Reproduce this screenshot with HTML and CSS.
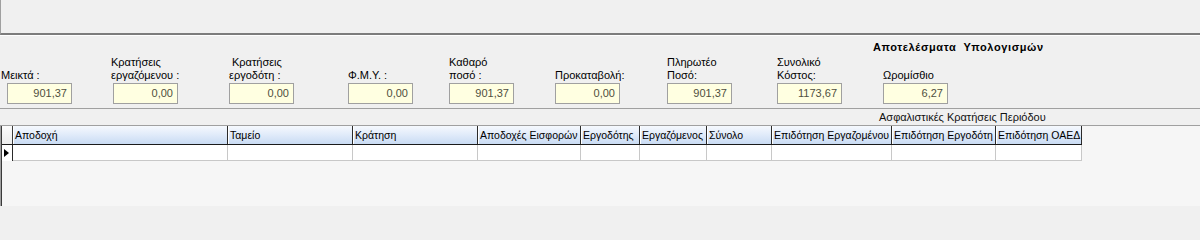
FILE: index.html
```html
<!DOCTYPE html>
<html lang="el">
<head>
<meta charset="utf-8">
<title>Αποτελέσματα Υπολογισμών</title>
<link rel="stylesheet" href="styles.css">
</head>
<body>
<div class="topbar"></div>
<div class="panel">
  <div class="title">Αποτελέσματα  Υπολογισμών</div>
  <div class="fields">
    <div class="field">
      <div class="label one shift-6">Μεικτά :</div>
      <div class="box">901,37</div>
    </div>
    <div class="field">
      <div class="label shift-2">Κρατήσεις<br>εργαζόμενου :</div>
      <div class="box">0,00</div>
    </div>
    <div class="field">
      <div class="label"><span class="indent2">Κρατήσεις</span><br>εργοδότη :</div>
      <div class="box">0,00</div>
    </div>
    <div class="field">
      <div class="label one">Φ.Μ.Υ. :</div>
      <div class="box">0,00</div>
    </div>
    <div class="field">
      <div class="label">Καθαρό<br>ποσό :</div>
      <div class="box">901,37</div>
    </div>
    <div class="field">
      <div class="label one">Προκαταβολή:</div>
      <div class="box">0,00</div>
    </div>
    <div class="field">
      <div class="label">Πληρωτέο<br>Ποσό:</div>
      <div class="box">901,37</div>
    </div>
    <div class="field">
      <div class="label">Συνολικό<br>Κόστος:</div>
      <div class="box">1173,67</div>
    </div>
    <div class="field">
      <div class="label one">Ωρομίσθιο</div>
      <div class="box">6,27</div>
    </div>
  </div>
</div>
<div class="band">Ασφαλιστικές Κρατήσεις Περιόδου</div>
<div class="grid">
  <div class="inner">
    <div class="row head">
      <div class="sel"></div>
      <div class="cell c1">Αποδοχή</div>
      <div class="cell c2">Ταμείο</div>
      <div class="cell c3">Κράτηση</div>
      <div class="cell c4">Αποδοχές Εισφορών</div>
      <div class="cell c5">Εργοδότης</div>
      <div class="cell c6">Εργαζόμενος</div>
      <div class="cell c7">Σύνολο</div>
      <div class="cell c8">Επιδότηση Εργαζομένου</div>
      <div class="cell c9">Επιδότηση Εργοδότη</div>
      <div class="cell c10">Επιδότηση ΟΑΕΔ</div>
    </div>
    <div class="row data">
      <div class="sel"><span class="arrow"></span></div>
      <div class="cell c1"></div>
      <div class="cell c2"></div>
      <div class="cell c3"></div>
      <div class="cell c4"></div>
      <div class="cell c5"></div>
      <div class="cell c6"></div>
      <div class="cell c7"></div>
      <div class="cell c8"></div>
      <div class="cell c9"></div>
      <div class="cell c10"></div>
    </div>
  </div>
</div>
</body>
</html>
```
FILE: styles.css
```css
* { box-sizing: border-box; }
html, body {
  margin: 0;
  padding: 0;
}
body {
  width: 1200px;
  height: 207px;
  overflow: hidden;
  background: #f0f0f0;
  font-family: "Liberation Sans", Arial, sans-serif;
  font-size: 11px;
  color: #000;
}
.topbar {
  height: 35px;
  border-left: 1px solid #a0a0a0;
  border-bottom: 2px solid #7c7c7c;
  background: #f0f0f0;
}
.panel {
  border-top: 1px solid #ffffff;
  border-bottom: 1px solid #a0a0a0;
  padding: 5px 0 4px 0;
  height: 74px;
}
.title {
  font-weight: bold;
  line-height: 13px;
  padding-left: 873px;
  white-space: pre;
  letter-spacing: 0.6px;
}
.fields {
  display: grid;
  grid-template-columns: 106px 116px 119px 101px 106px 112px 110px 106px 65px;
  padding-left: 7px;
  margin-top: 2px;
}
.field {
  display: flex;
  flex-direction: column;
}
.label {
  height: 26px;
  line-height: 13px;
  white-space: nowrap;
  margin-bottom: 1px;
}
.label.one { padding-top: 13px; }
.shift-6 { margin-left: -6px; }
.shift-2 { margin-left: -2px; }
.indent2 { padding-left: 3px; }
.box {
  width: 65px;
  height: 21px;
  border: 1px solid #a0a0a0;
  background: #ffffe1;
  color: #4f4f40;
  text-align: right;
  padding-right: 4px;
  line-height: 19px;
}
.band {
  height: 16px;
  line-height: 16px;
  padding-left: 879px;
  color: #111;
}
.grid {
  height: 81px;
  border-top: 1px solid #a0a0a0;
  border-left: 1px solid #a0a0a0;
  background: #f6f6f6;
}
.inner {
  height: 100%;
  border-left: 1px solid #3a3a3a;
}
.row {
  display: flex;
}
.head {
  height: 19px;
  border-bottom: 1px solid #1a1a1a;
  width: 1080px;
}
.head .sel {
  width: 11px;
  border-right: 1px solid #3a3a3a;
  background: linear-gradient(#fcfcfc, #ededed);
}
.head .cell {
  border-left: 1px solid #ffffff;
  border-right: 1px solid #2a2a2a;
  background: linear-gradient(#f6f9fe 0%, #e2ecfa 45%, #c9dbf3 100%);
  line-height: 18px;
  padding-left: 1px;
  white-space: nowrap;
  overflow: hidden;
  font-size: 10.5px;
  color: #000;
}
.data {
  height: 16px;
  width: 1080px;
}
.data .sel {
  width: 11px;
  border-right: 1px solid #2a2a2a;
  background: #ffffff;
  display: flex;
  align-items: center;
  padding-left: 2px;
}
.arrow {
  width: 0;
  height: 0;
  border-left: 5px solid #000;
  border-top: 4px solid transparent;
  border-bottom: 4px solid transparent;
}
.data .cell {
  background: #ffffff;
  border-right: 1px solid #c8c8c8;
  border-bottom: 1px solid #c8c8c8;
}
.c1 { width: 215px; }
.c2 { width: 125px; }
.c3 { width: 125px; }
.c4 { width: 103px; }
.c5 { width: 59px; }
.c6 { width: 67px; }
.c7 { width: 65px; }
.c8 { width: 120px; }
.c9 { width: 104px; }
.c10 { width: 86px; }
```
